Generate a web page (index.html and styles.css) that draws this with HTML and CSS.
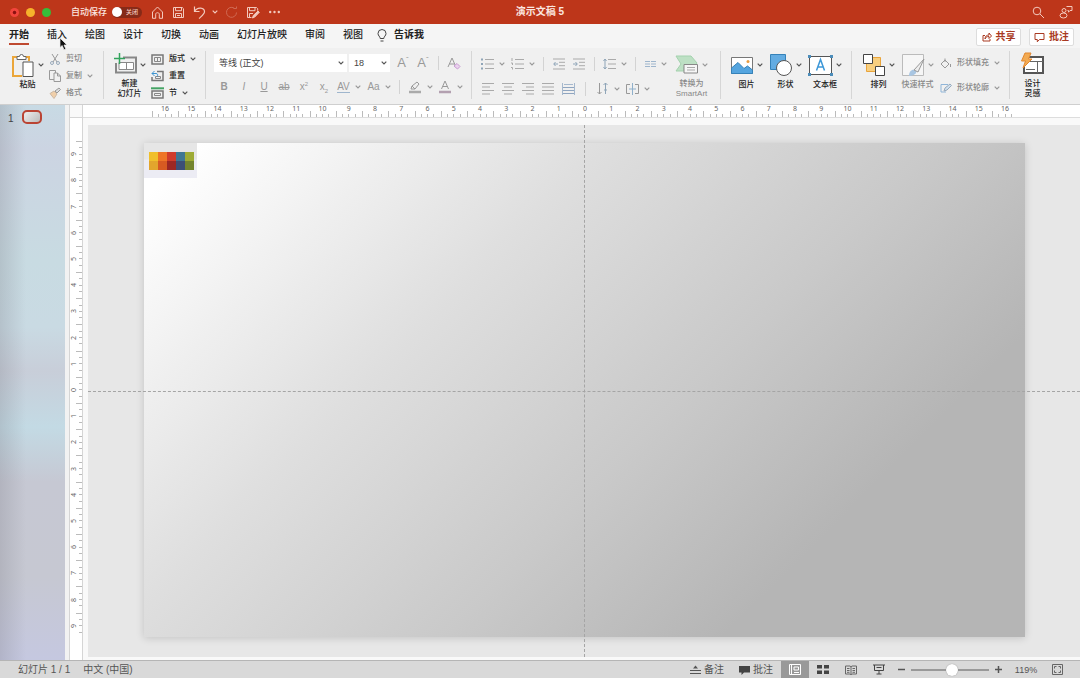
FILE: index.html
```html
<!DOCTYPE html>
<html lang="zh-CN">
<head>
<meta charset="utf-8">
<title>演示文稿5</title>
<link rel="stylesheet" href="styles.css">
</head>
<body>
<svg class="sprite" aria-hidden="true">
  <symbol id="chev" viewBox="0 0 6 4"><path d="M.7.7 3 3 5.300.7" fill="none" stroke="currentColor" stroke-width="1.200"/></symbol>
</svg>

<header class="titlebar">
  <div class="title-left">
    <div class="lights"><button class="light red" aria-label="关闭"></button><button class="light yellow" aria-label="最小化"></button><button class="light green" aria-label="全屏"></button></div>
    <label class="autosave" for="autosave">自动保存</label>
    <span class="switch"><input type="checkbox" id="autosave"><span class="switch-text">关闭</span></span>
    <nav class="quick">
      <button aria-label="主页"><svg width="13" height="13" viewBox="0 0 13 13"><path d="M1.500 6 6.500 1l5 5v6.300H8.300V8.200c0-2-3.600-2-3.600 0v4.100H1.500z"/></svg></button>
      <button aria-label="保存"><svg width="13" height="13" viewBox="0 0 13 13"><path d="M1.500 1.500h8.800l1.200 1.200v8.800h-10zM3.500 1.500v3.200h6V1.500M3.500 11.500v-4h6v4M5 9.500h3"/></svg></button>
      <button aria-label="撤销"><svg width="13" height="13" viewBox="0 0 13 13"><path d="M1.500.5v5h5M1.500 5.500C4.500.5 11.500 1.500 11.500 5.800 11.500 8 9 9.800 6 12.500" stroke-width="1.200"/></svg></button>
      <button class="tiny" aria-label="撤销选项"><svg width="6" height="4"><use href="#chev"/></svg></button>
      <button class="dim" aria-label="重做"><svg width="13" height="13" viewBox="0 0 13 13"><path d="M9 2A5 5 0 1 0 11.500 6.500M8.500 2.500h3v-2"/></svg></button>
      <button aria-label="另存为"><svg width="14" height="13" viewBox="0 0 14 13"><path d="M5.500 11.500h-4v-10h9l1.200 1.200v2M3.500 1.500v3.200h5.500V1.500M3.500 11.500v-4H7"/><path d="m6.500 12 .8-2.500L12 5l1.300 1.300-4.600 4.800z" fill="currentColor"/></svg></button>
      <button aria-label="更多"><svg width="13" height="4" viewBox="0 0 13 4"><g fill="currentColor" stroke="none"><circle cx="2.200" cy="2" r="1.200"/><circle cx="6.500" cy="2" r="1.200"/><circle cx="10.800" cy="2" r="1.200"/></g></svg></button>
    </nav>
  </div>
  <h1>演示文稿 5</h1>
  <div class="title-right">
    <button aria-label="搜索"><svg width="13" height="13" viewBox="0 0 13 13"><circle cx="5" cy="5" r="3.800"/><path d="m8 8 4 4"/></svg></button>
    <button aria-label="协作"><svg width="14" height="14" viewBox="0 0 14 14"><circle cx="5" cy="5.500" r="2"/><ellipse cx="4.500" cy="10.500" rx="3.500" ry="2.500"/><path d="M7.500 1.500h5.500v4h-2L9.500 7.200V5.500h-1"/></svg></button>
  </div>
</header>

<nav class="tabs">
  <div class="tab-list">
    <button class="tab active">开始</button><button class="tab">插入</button><button class="tab">绘图</button><button class="tab">设计</button><button class="tab">切换</button><button class="tab">动画</button><button class="tab">幻灯片放映</button><button class="tab">审阅</button><button class="tab">视图</button>
    <button class="tab tell"><svg width="10" height="13" viewBox="0 0 10 13"><path d="M3.200 9.500C3.200 7.500 1 6.800 1 4.500a4 4 0 0 1 8 0c0 2.300-2.200 3-2.200 5zM3.500 12h3" fill="none" stroke="#444"/></svg>告诉我</button>
  </div>
  <div class="tab-actions">
    <button class="action"><svg width="10" height="10" viewBox="0 0 10 10"><path d="M3 3.500H1v5.500h7V7M3 7c0-3 2-4 4-4V1l2.500 3L7 6.500v-2C5 4.500 4 5 3 7z"/></svg>共享</button>
    <button class="action"><svg width="11" height="11" viewBox="0 0 11 11"><path d="M1 1.500h9v6H5.500L3.300 9.800V7.500H1z"/></svg>批注</button>
  </div>
  <svg class="cursor" width="9" height="14" viewBox="0 0 9 14"><path d="M1 1v9.500l2.200-2L5 12.700l1.800-.8L5 8h3z" fill="#111" stroke="#eee" stroke-width=".7"/></svg>
</nav>

<section class="ribbon">
  <div class="group clipboard">
    <button class="big"><span class="big-icon"><svg width="24" height="25" viewBox="0 0 24 25"><path d="M7 4H2v19h9M14 4h4v4" fill="none" stroke="#eba63a" stroke-width="2"/><path d="M6 3.500h2.500a2 2 0 0 1 4 0H15V6.500H6z" fill="#fff" stroke="#666"/><path d="M12 9h10v14.500H12z" fill="#fff" stroke="#555"/></svg><svg class="chev" width="6" height="4"><use href="#chev"/></svg></span>粘贴</button>
    <div class="stack dim">
      <button><svg width="12" height="12" viewBox="0 0 12 12"><path d="m3 1 5 8M9 1 4 9" stroke="#999" fill="none"/><circle cx="3" cy="10" r="1.500" fill="none" stroke="#9ab"/><circle cx="9" cy="10" r="1.500" fill="none" stroke="#9ab"/></svg>剪切</button>
      <button><svg width="12" height="12" viewBox="0 0 12 12"><path d="M5 9.500H.5v-9h6V3M5 3h3.500l3 3v5.500H5zM8.500 3v3h3" stroke="#999" fill="none"/></svg>复制<svg class="chev" width="6" height="4"><use href="#chev"/></svg></button>
      <button><svg width="12" height="12" viewBox="0 0 12 12"><path d="M1 6.500 5 4l3 3-3 4.500z" fill="#f0cfaa" stroke="#ccb9a5"/><path d="m6 4 2 2 3.500-3.500L10 1z" fill="#ddd" stroke="#999"/></svg>格式</button>
    </div>
  </div>

  <div class="group slides">
    <button class="big"><span class="big-icon"><svg width="24" height="25" viewBox="0 0 24 25"><path d="M10 5.500h13v15H3V11" fill="none" stroke="#888" stroke-width="2"/><path d="M6 10.500h14.500v7H6zM13.500 10.500v7" fill="#fff" stroke="#888"/><path d="M6.500 1v11M1 6.500h11" stroke="#31a35c" stroke-width="1.500"/></svg><svg class="chev" width="6" height="4"><use href="#chev"/></svg></span>新建<br>幻灯片</button>
    <div class="stack">
      <button><svg width="13" height="11" viewBox="0 0 13 11"><path d="M1 1h11v9H1z" fill="none" stroke="#777" stroke-width="1.500"/><path d="M3.500 3.500h6v4h-6zM6.500 3.500v4" fill="none" stroke="#888"/></svg>版式<svg class="chev" width="6" height="4"><use href="#chev"/></svg></button>
      <button><svg width="13" height="12" viewBox="0 0 13 12"><path d="M6 1.500h6v9H1V7" fill="none" stroke="#777" stroke-width="1.500"/><path d="M4.500 6.500h5v2h-5z" fill="none" stroke="#888"/><path d="M1 3.500h4c2 0 2 2 1 3M3.500 1 1 3.500 3.500 6" fill="none" stroke="#3c94d1"/></svg>重置</button>
      <button><svg width="13" height="12" viewBox="0 0 13 12"><path d="M0 1.300h13" stroke="#44a364" stroke-width="2"/><path d="M1 4h11v7H1z" fill="none" stroke="#777" stroke-width="1.500"/><path d="M3.500 6.500h6v2h-6z" fill="none" stroke="#888"/></svg>节<svg class="chev" width="6" height="4"><use href="#chev"/></svg></button>
    </div>
  </div>

  <div class="group font">
    <div class="row">
      <span class="combo family"><select aria-label="字体"><option>等线 (正文)</option></select><svg class="chev" width="6" height="4"><use href="#chev"/></svg></span>
      <span class="combo size"><select aria-label="字号"><option>18</option></select><svg class="chev" width="6" height="4"><use href="#chev"/></svg></span>
      <button class="tool large">A<sup>ˆ</sup></button>
      <button class="tool large">A<sup>ˇ</sup></button>
      <i class="sep"></i>
      <button class="tool large" aria-label="清除格式"><svg width="15" height="15" viewBox="0 0 15 15"><path d="m1 11 4-9 4 9M2.500 8h5" fill="none" stroke="#999"/><path d="m7 10 3-2.500 3 3L10.500 13z" fill="#ead2ee" stroke="#c89bd2"/></svg></button>
    </div>
    <div class="row">
      <button class="tool"><b>B</b></button><button class="tool"><em>I</em></button><button class="tool"><u>U</u></button><button class="tool"><s>ab</s></button><button class="tool">x<sup>2</sup></button><button class="tool">x<sub>2</sub></button>
      <button class="tool drop"><span class="spacing">AV</span><svg class="chev" width="6" height="4"><use href="#chev"/></svg></button>
      <button class="tool drop">Aa<svg class="chev" width="6" height="4"><use href="#chev"/></svg></button>
      <i class="sep"></i>
      <button class="tool drop" aria-label="突出显示"><svg width="14" height="14" viewBox="0 0 14 14"><path d="m3 9 1-3 5-4 2 2-4 5zM4 6l3 3" fill="none" stroke="#999"/><path d="M1 12h12" stroke="#aaa" stroke-width="2.500"/></svg><svg class="chev" width="6" height="4"><use href="#chev"/></svg></button>
      <button class="tool drop" aria-label="字体颜色"><svg width="14" height="14" viewBox="0 0 14 14"><path d="m3.500 9 3.500-8 3.500 8M5 6.500h4" fill="none" stroke="#999"/><path d="M1 12h12" stroke="#b3a0b0" stroke-width="2.500"/></svg><svg class="chev" width="6" height="4"><use href="#chev"/></svg></button>
    </div>
  </div>

  <div class="group para">
    <div class="rows">
      <div class="row">
        <button class="tool drop" aria-label="项目符号"><svg width="13" height="12" viewBox="0 0 13 12"><path d="M4 1.500h9M4 6h9M4 10.500h9" stroke="#aaa"/><path d="M0 1.500h2M0 6h2M0 10.500h2" stroke="#8fa5b8" stroke-width="2"/></svg><svg class="chev" width="6" height="4"><use href="#chev"/></svg></button>
        <button class="tool drop" aria-label="编号"><svg width="13" height="12" viewBox="0 0 13 12"><path d="M4 1.500h9M4 6h9M4 10.500h9M1 0v3M0 5h1.500v2M0 9.500h1.500v2" stroke="#aaa" fill="none"/></svg><svg class="chev" width="6" height="4"><use href="#chev"/></svg></button>
        <i class="sep"></i>
        <button class="tool" aria-label="减少缩进"><svg width="12" height="12" viewBox="0 0 12 12"><path d="M0 1h12M6 4.300h6M6 7.700h6M0 11h12" stroke="#aaa"/><path d="M5 6H.8M2.500 4 .8 6l1.700 2" stroke="#8fa5b8" fill="none"/></svg></button>
        <button class="tool" aria-label="增加缩进"><svg width="12" height="12" viewBox="0 0 12 12"><path d="M0 1h12M6 4.300h6M6 7.700h6M0 11h12" stroke="#aaa"/><path d="M0 6h4.200M2.500 4l1.700 2-1.700 2" stroke="#8fa5b8" fill="none"/></svg></button>
        <i class="sep"></i>
        <button class="tool drop" aria-label="行距"><svg width="13" height="12" viewBox="0 0 13 12"><path d="M5 1.500h8M5 6h8M5 10.500h8" stroke="#aaa"/><path d="M2 1v10M.5 3 2 1l1.500 2M.5 9 2 11l1.500-2" stroke="#8fa5b8" fill="none"/></svg><svg class="chev" width="6" height="4"><use href="#chev"/></svg></button>
        <i class="sep"></i>
        <button class="tool drop" aria-label="分栏"><svg width="11" height="6" viewBox="0 0 11 6"><path d="M0 .5h5M6 .5h5M0 3h5M6 3h5M0 5.500h5M6 5.500h5" stroke="#9fb6cd"/></svg><svg class="chev" width="6" height="4"><use href="#chev"/></svg></button>
      </div>
      <div class="row">
        <button class="tool" aria-label="左对齐"><svg width="12" height="12" viewBox="0 0 12 12"><path d="M0 .5h12M0 4h8M0 7.500h12M0 11h8" stroke="#aaa"/></svg></button>
        <button class="tool" aria-label="居中"><svg width="12" height="12" viewBox="0 0 12 12"><path d="M0 .5h12M2 4h8M0 7.500h12M2 11h8" stroke="#aaa"/></svg></button>
        <button class="tool" aria-label="右对齐"><svg width="12" height="12" viewBox="0 0 12 12"><path d="M0 .5h12M4 4h8M0 7.500h12M4 11h8" stroke="#aaa"/></svg></button>
        <button class="tool" aria-label="两端对齐"><svg width="12" height="12" viewBox="0 0 12 12"><path d="M0 .5h12M0 4h12M0 7.500h12M0 11h12" stroke="#aaa"/></svg></button>
        <button class="tool" aria-label="分散对齐"><svg width="13" height="12" viewBox="0 0 13 12"><path d="M0 4.500h13M0 7.500h13M0 10.500h13" stroke="#8fa5c0"/><path d="M.5 0v12M12.500 0v12M2 1.500h9" stroke="#a5b8cd"/></svg></button>
        <i class="sep wide"></i>
        <button class="tool drop" aria-label="文字方向"><svg width="12" height="13" viewBox="0 0 12 13"><path d="M2.500 1v11M.5 10l2 2 2-2" stroke="#999" fill="none"/><path d="M8.500 1v11M6.500 3l2-2 2 2M7 8h3" stroke="#8fa5b8" fill="none"/></svg><svg class="chev" width="6" height="4"><use href="#chev"/></svg></button>
        <button class="tool drop" aria-label="对齐文本"><svg width="13" height="12" viewBox="0 0 13 12"><path d="M4 1.500H.5v9H4M9 1.500h3.500v9H9" stroke="#999" fill="none"/><path d="M6.500 0v12M3 6h7" stroke="#8fb0cb"/></svg><svg class="chev" width="6" height="4"><use href="#chev"/></svg></button>
      </div>
    </div>
    <button class="big dim smart"><span class="big-icon"><svg width="24" height="20" viewBox="0 0 24 20"><path d="M1 1h15l6 7-3 4H9v4H1l5-7z" fill="#bde0c4" stroke="#a4d2ae"/><path d="M9 9.500h13.500V18H9z" fill="#f6f6f6" stroke="#888"/><path d="M12 12.500h8M12 15h8" stroke="#aaa"/></svg><svg class="chev" width="6" height="4"><use href="#chev"/></svg></span>转换为<br>SmartArt</button>
  </div>

  <div class="group insert">
    <button class="big"><span class="big-icon"><svg width="24" height="19" viewBox="0 0 24 19"><path d="M1.500 1.500h21v16h-21z" fill="#fff" stroke="#777"/><path d="M1.500 12 8 6.500l6 6 3.500-2.500 5 4v3.500h-21z" fill="#55a5df" stroke="#3582b9"/><circle cx="18" cy="5.500" r="1.500" fill="#e99d42"/></svg><svg class="chev" width="6" height="4"><use href="#chev"/></svg></span>图片</button>
    <button class="big"><span class="big-icon"><svg width="24" height="24" viewBox="0 0 24 24"><path d="M1.500 1.500h15v15h-15z" fill="#63ace2" stroke="#3582b9"/><circle cx="15" cy="15" r="7.500" fill="#fff" stroke="#555"/></svg><svg class="chev" width="6" height="4"><use href="#chev"/></svg></span>形状</button>
    <button class="big"><span class="big-icon"><svg width="25" height="21" viewBox="0 0 25 21"><path d="M1.500 1.500h22v18h-22z" fill="#fff" stroke="#555"/><path d="M0 0h3v3H0zM22 0h3v3h-3zM0 18h3v3H0zM22 18h3v3h-3z" fill="#4c8dba"/><path d="m8.500 15.500 4-11 4 11M10 12h5" fill="none" stroke="#3e98d8" stroke-width="1.500"/></svg><svg class="chev" width="6" height="4"><use href="#chev"/></svg></span>文本框</button>
  </div>

  <div class="group arrange">
    <button class="big"><span class="big-icon"><svg width="24" height="24" viewBox="0 0 24 24"><path d="M4.500 4.500h14v14h-14z" fill="#f8cf7f" stroke="#e9a43b"/><path d="M1.500 1.500h9v9h-9zM13.500 13.500h9v9h-9z" fill="#fff" stroke="#444"/></svg><svg class="chev" width="6" height="4"><use href="#chev"/></svg></span>排列</button>
    <button class="big dim"><span class="big-icon"><svg width="24" height="24" viewBox="0 0 24 24"><path d="M1.500 1.500h21v21h-21z" fill="#f6f6f6" stroke="#bbb"/><path d="M8 23c0-5 3-7 6-6s1 6-6 6z" fill="#a9c6e2"/><path d="m13 17 10-11-6 13z" fill="#eee" stroke="#999"/></svg><svg class="chev" width="6" height="4"><use href="#chev"/></svg></span>快速样式</button>
    <div class="stack two dim">
      <button><svg width="12" height="11" viewBox="0 0 12 11"><path d="m1 6 4-4 4 4-4 4zM5 4V.5M10.500 6v3" fill="none" stroke="#999"/></svg>形状填充<svg class="chev" width="6" height="4"><use href="#chev"/></svg></button>
      <button><svg width="12" height="11" viewBox="0 0 12 11"><path d="M8 1.500H1V9h5" fill="none" stroke="#8fb5d8"/><path d="m4 8 1-3 5-4 1.500 1.500L7 7z" fill="#cfe0ef" stroke="#9ab"/></svg>形状轮廓<svg class="chev" width="6" height="4"><use href="#chev"/></svg></button>
    </div>
  </div>

  <div class="group ideas">
    <button class="big"><span class="big-icon"><svg width="25" height="25" viewBox="0 0 25 25"><path d="M9 5h14v16H4V15" fill="#fff" stroke="#555" stroke-width="2"/><path d="M9 9.500h14M17.500 9.500V21M6 17.500h9" stroke="#666"/><path d="M5 1h6L8.500 7H12L3 16l2.500-7H1.500z" fill="#f2aa52" stroke="#e3872e"/></svg></span>设计<br>灵感</button>
  </div>
</section>

<main class="work">
  <aside class="thumbs"><span class="thumb-no">1</span><button class="thumb" aria-label="幻灯片 1"></button></aside>
  <div class="editor">
    <div class="corner"></div>
    <div class="ruler-h" id="ruler-h"></div>
    <div class="ruler-v" id="ruler-v"></div>
    <div class="stage">
      <div class="slide">
        <div class="swatch-box"><div class="swatches"><i class="c1"></i><i class="c2"></i><i class="c3"></i><i class="c4"></i><i class="c5"></i></div></div>
      </div>
      <i class="guide-h"></i><i class="guide-v"></i>
    </div>
  </div>
</main>

<footer class="status">
  <div class="status-left"><span>幻灯片 1 / 1</span><span>中文 (中国)</span></div>
  <div class="status-right">
    <button><svg width="11" height="10" viewBox="0 0 11 10"><path d="M0 5.500h11M0 8.500h11" stroke="#555"/><path d="M5.500.5 8 3.500H3z" fill="#555"/></svg>备注</button>
    <button class="comment"><svg width="11" height="10" viewBox="0 0 11 10"><path d="M0 1h11v6.500H5L2.500 10V7.500H0z" fill="#444"/></svg>批注</button>
    <button class="view on" aria-label="普通视图"><svg width="12" height="11" viewBox="0 0 12 11"><path d="M.5.500h11v10H.5zM2.500.5v10M5 3h4.500v3H5zM5 8.500h5" fill="none" stroke="#fff"/></svg></button>
    <button class="view" aria-label="幻灯片浏览"><svg width="12" height="9" viewBox="0 0 12 9"><path d="M0 0h5v3.500H0zM7 0h5v3.500H7zM0 5.500h5V9H0zM7 5.500h5V9H7z" fill="#444"/></svg></button>
    <button class="view" aria-label="阅读视图"><svg width="12" height="10" viewBox="0 0 12 10"><path d="M.5 1H5l1 .8L7 1h4.500v8H7l-1 .8L5 9H.5zM6 2v7M2 3.500h2.500M2 5.500h2.500M2 7.300h2.500M7.500 3.500H10M7.500 5.500H10M7.500 7.300H10" fill="none" stroke="#666"/></svg></button>
    <button class="view" aria-label="放映"><svg width="12" height="11" viewBox="0 0 12 11"><path d="M0 1h12M1.500 1v5.500h9V1M3.500 3.500h5M6 6.500V10M3.500 10h5" fill="none" stroke="#444"/></svg></button>
    <button class="step out" aria-label="缩小"><svg width="7" height="7" viewBox="0 0 7 7"><path d="M0 3.500h7" stroke="#555" stroke-width="1.500"/></svg></button>
    <input class="zoom" type="range" min="0" max="100" value="53" aria-label="缩放">
    <button class="step" aria-label="放大"><svg width="7" height="7" viewBox="0 0 7 7"><path d="M0 3.500h7M3.500 0v7" stroke="#555" stroke-width="1.500"/></svg></button>
    <span class="percent">119%</span>
    <button class="fit" aria-label="适应窗口"><svg width="11" height="11" viewBox="0 0 11 11"><path d="M.5.500h10v10H.5zM2.500 4.500v-2h2M6.500 2.500h2v2M8.500 6.500v2h-2M4.500 8.500h-2v-2" fill="none" stroke="#666"/></svg></button>
  </div>
</footer>
<script src="rulers.js"></script>
</body>
</html>
```
FILE: styles.css
```css
* { box-sizing: border-box; }
body {
  margin: 0; height: 100vh; display: flex; flex-direction: column; overflow: hidden;
  font: 10px/12px "Liberation Sans", "Noto Sans CJK SC", sans-serif; color: #222; background: #efefef;
}
button { border: 0; padding: 0; margin: 0; background: none; font: inherit; color: inherit; display: flex; align-items: center; }
svg { display: block; flex: none; }
.sprite { position: absolute; width: 0; height: 0; }
.chev { color: #555; }

.titlebar { flex: none; height: 24px; background: #bd361a; color: #f3c9bd; display: grid; grid-template-columns: 1fr auto 1fr; align-items: center; }
.titlebar svg { fill: none; stroke: currentColor; }
.titlebar .tiny svg { stroke: none; }
.titlebar h1 { margin: 0; font-size: 10px; font-weight: 700; color: #fbe6e0; }
.title-left { display: flex; align-items: center; padding-left: 10px; }
.lights { display: flex; gap: 7px; width: 61px; }
.light { width: 9px; height: 9px; border-radius: 50%; }
.red { background: radial-gradient(circle, #8c1010 20%, #f2453c 35%); }
.yellow { background: #f6b22c; }
.green { background: #35bd3a; }
.autosave { font-size: 9px; font-weight: 500; color: #fbe6e0; width: 41px; white-space: nowrap; }
.switch { display: flex; align-items: center; width: 30px; height: 11px; border-radius: 6px; background: #862a18; }
.switch input { appearance: none; margin: 0; width: 10px; height: 10px; border-radius: 50%; background: #fff; }
.switch-text { font-size: 6px; line-height: 10px; font-weight: 500; flex: 1; text-align: center; }
.quick { display: flex; align-items: center; gap: 8px; margin-left: 9px; }
.quick .tiny { margin: 0 -1px 0 -2px; }
.quick .dim { opacity: .35; }
.title-right { display: flex; gap: 14px; justify-content: flex-end; padding-right: 7px; }

.tabs { flex: none; position: relative; height: 24px; display: flex; justify-content: space-between; background: #f5f5f5; }
.tab-list { display: flex; gap: 18px; padding-left: 9px; }
.tab { height: 21px; padding-top: 3px; border-bottom: 2px solid transparent; font-weight: 500; white-space: nowrap; }
.tab.active { font-weight: 700; border-color: #bf4a31; }
.tell { gap: 7px; margin-left: -4px; font-weight: 700; }
.tab-actions { display: flex; gap: 8px; padding: 4px 6px 0 0; }
.action { height: 18px; width: 45px; justify-content: center; gap: 4px; background: #fff; border: 1px solid #ddd; border-radius: 2px; color: #a93a22; font-weight: 700; }
.action svg { fill: none; stroke: currentColor; }
.cursor { position: absolute; left: 59px; top: 13px; }

.ribbon { flex: none; height: 57px; display: flex; background: #f0f0f0; border-bottom: 1px solid #cfcfcf; font-size: 8px; line-height: 10px; font-weight: 500; white-space: nowrap; }
.group { flex: none; display: flex; position: relative; border-right: 1px solid #d6d6d6; margin: 3px 0 5px; }
.group:last-child { border: 0; }
.big { flex-direction: column; text-align: center; }
.big-icon { display: flex; align-items: center; gap: 3px; height: 28px; margin-bottom: 1px; }
.big.dim, .stack.dim { color: #888; }
.dim .chev, .tool .chev { color: #999; }
.stack { display: flex; flex-direction: column; justify-content: space-between; padding: 1px 0 0; height: 49px; }
.stack button { gap: 5px; height: 14px; }
.clipboard { width: 104px; padding-left: 11px; }
.clipboard .stack { margin-left: 5px; }
.slides { width: 102px; padding-left: 9px; }
.slides .stack { margin-left: 5px; }
.font { width: 266px; flex-direction: column; padding-left: 8px; }
.row { display: flex; align-items: center; height: 25px; }
.combo { position: relative; display: flex; align-items: center; height: 18px; background: #fff; }
.combo select { appearance: none; width: 100%; height: 18px; border: 0; background: none; padding: 0 5px; font: 9px "Liberation Sans", "Noto Sans CJK SC", sans-serif; color: #444; }
.combo .chev { position: absolute; right: 3px; top: 7px; pointer-events: none; }
.family { width: 133px; margin-right: 2px; }
.size { width: 41px; margin-right: 3px; }
.tool { width: 20px; height: 20px; justify-content: center; font-size: 10px; font-weight: 400; color: #999; }
.tool sup, .tool sub { font-size: 6px; line-height: 6px; }
.tool sup { align-self: flex-start; padding-top: 4px; }
.tool sub { align-self: flex-end; padding-bottom: 3px; }
.tool.large { font-size: 13px; }
.tool.large sup { font-size: 8px; }
.tool.drop { width: 30px; gap: 5px; }
.spacing { border-bottom: 1px solid #9fb6cd; line-height: 10px; }
.sep { width: 1px; height: 14px; background: #d3d3d3; margin: 0 5px; }
.sep.wide { margin: 0 7px; }
.para { width: 249px; padding-left: 6px; }
.rows { flex: none; width: 194px; }
.smart { margin-left: 3px; }
.insert { width: 131px; padding-left: 9px; gap: 6px; }
.arrange { width: 158px; padding-left: 10px; gap: 6px; }
.stack.two { justify-content: flex-start; gap: 11px; padding-top: 5px; }
.ideas { padding-left: 10px; }

.work { flex: 1; min-height: 0; display: flex; }
.thumbs { flex: none; width: 65px; display: flex; align-items: flex-start; gap: 8px; padding: 5px 0 0 8px; color: #444; background: linear-gradient(90deg, rgba(120, 120, 130, .25), transparent 40%), linear-gradient(180deg, #c8dae4 0, #ccd4e2 8%, #c8dbe2 28%, #c9dae3 40%, #c8ced9 48%, #c3dae4 58%, #c6c8d3 68%, #c6c8d2 85%, #c5c8e0 100%); }
.thumb-no { padding-top: 3px; }
.thumb { width: 20px; height: 14px; border: 2px solid #ba4434; border-radius: 5px; background: linear-gradient(135deg, #eee, #bbb); }
.editor { flex: 1; min-width: 0; display: grid; grid-template: 13px 1fr / 14px 1fr; background: #f9f9f9; border-left: 4px solid #f2f2f2; }
.corner { border: solid #d5d5d5; border-width: 0 1px 1px; }
.ruler-h { display: flex; background: #fff; border-bottom: 1px solid #ddd; padding: 0 62px 0 69px; }
.ruler-v { display: flex; flex-direction: column; background: #fff; border: solid #d5d5d5; border-width: 0 1px; padding: 23px 0 21px; }
.mark { flex: 1; color: #666; font: 7px/8px "Noto Sans", sans-serif; text-align: center; }
.ruler-h .mark { background: linear-gradient(#bbb, #bbb) 0 100% / 1px 6px no-repeat, linear-gradient(#bbb, #bbb) 25% 100% / 1px 3px no-repeat, linear-gradient(#bbb, #bbb) 50% 100% / 1px 3px no-repeat, linear-gradient(#bbb, #bbb) 75% 100% / 1px 3px no-repeat; }
.ruler-v .mark { display: flex; align-items: center; background: linear-gradient(#bbb, #bbb) 100% 0 / 6px 1px no-repeat, linear-gradient(#bbb, #bbb) 100% 25% / 3px 1px no-repeat, linear-gradient(#bbb, #bbb) 100% 50% / 3px 1px no-repeat, linear-gradient(#bbb, #bbb) 100% 75% / 3px 1px no-repeat; }
.ruler-v span { writing-mode: vertical-rl; transform: rotate(180deg); }
.stage { position: relative; display: flex; margin: 7px 0 3px 5px; padding: 18px 55px 20px 56px; background: #e7e7e7; }
.slide { flex: 1; background: linear-gradient(135deg, #fff 4%, #dfdfdf 33%, #c9c9c9 58%, #b5b5b5 78%); box-shadow: 0 1px 8px rgba(0, 0, 0, .16); }
.swatch-box { width: 53px; height: 35px; padding: 9px 3px 8px 5px; background: linear-gradient(#e6e6e6 45%, #ececf4 50%); }
.swatches { display: flex; height: 18px; }
.swatches i { flex: 1; }
.c1 { background: linear-gradient(#f0bf2b 50%, #e2a52d 50%); }
.c2 { background: linear-gradient(#ee7526 50%, #d75a22 50%); }
.c3 { background: linear-gradient(#cf3c2c 50%, #9c2724 50%); }
.c4 { background: linear-gradient(#3f7793 50%, #3c4f77 50%); }
.c5 { background: linear-gradient(#9eab35 50%, #74852f 50%); }
.guide-h { position: absolute; left: 0; right: 0; top: 50%; border-top: 1px dashed #a5a5a5; }
.guide-v { position: absolute; top: 0; bottom: 0; left: 50%; border-left: 1px dashed #a5a5a5; }

.status { flex: none; height: 18px; display: flex; justify-content: space-between; background: #d9d9d9; border-top: 1px solid #b5b5b5; color: #555; white-space: nowrap; }
.status-left { display: flex; align-items: center; gap: 13px; padding-left: 18px; }
.status-right { display: flex; align-items: stretch; padding-right: 17px; }
.status-right button { gap: 3px; justify-content: center; }
.status-right .comment { margin: 0 8px 0 15px; }
.view { width: 28px; }
.view.on { background: #999; }
.status-right .step { width: 16px; }
.status-right .out { width: 17px; }
.zoom { appearance: none; width: 78px; height: 17px; margin: 0 1px; background: linear-gradient(#999, #999) center / 100% 2px no-repeat; }
.zoom::-webkit-slider-thumb { appearance: none; width: 12px; height: 12px; border-radius: 50%; background: #fff; box-shadow: 0 0 1px #777; }
.percent { width: 40px; align-self: center; text-align: center; font-size: 9px; }
.status-right .fit { margin-left: 6px; }
```
FILE: rulers.js
```js
function fillRuler(id, limit) {
  const ruler = document.getElementById(id);
  for (let n = -limit; n <= limit; n += 1) {
    const mark = document.createElement("div");
    const label = document.createElement("span");
    mark.className = "mark";
    label.textContent = Math.abs(n);
    mark.append(label);
    ruler.append(mark);
  }
}
fillRuler("ruler-h", 16);
fillRuler("ruler-v", 9);
```
